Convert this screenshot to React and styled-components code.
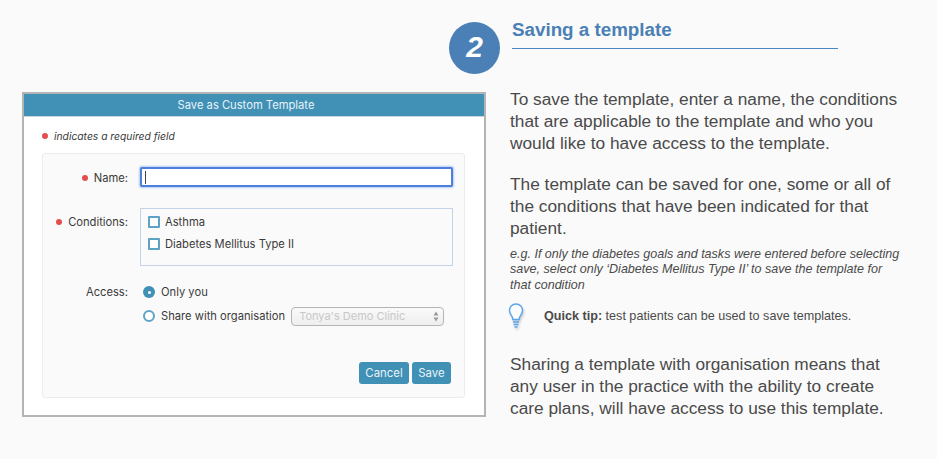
import React from "react";
import styled, { createGlobalStyle } from "styled-components";

const Global = createGlobalStyle`
  html, body {
    margin: 0;
    padding: 0;
    background: #fafafa;
  }
`;

const Page = styled.div`
  display: flex;
  width: 937px;
  height: 459px;
  overflow: hidden;
  background: #fafafa;
  font-family: "Liberation Sans", Arial, sans-serif;
`;

const Left = styled.div`
  width: 449px;
  padding: 92px 0 0 22px;
  box-sizing: border-box;
  flex: none;
`;

const Dialog = styled.div`
  width: 464px;
  height: 325px;
  box-sizing: border-box;
  border: 2px solid #b4b4b4;
  background: #fff;
  font-family: Inter, "Liberation Sans", sans-serif;
  color: #3a3a3a;
`;

const DialogTitle = styled.div`
  height: 23px;
  box-sizing: border-box;
  padding-right: 16px;
  line-height: 22px;
  background: #4190b6;
  border-bottom: 1px solid #c9d6dd;
  color: #e8f3f8;
  font-size: 11.2px;
  text-align: center;
`;

const Required = styled.div`
  display: flex;
  align-items: center;
  gap: 6px;
  height: 36px;
  box-sizing: border-box;
  padding: 1px 0 0 18px;
  font-size: 10.3px;
  font-style: italic;
`;

const Dot = styled.span`
  width: 6px;
  height: 6px;
  border-radius: 50%;
  background: #e34f4f;
  flex: none;
`;

const Panel = styled.div`
  width: 423px;
  height: 245px;
  margin-left: 18px;
  box-sizing: border-box;
  border: 1px solid #ececec;
  border-radius: 3px;
  background: #fafafa;
  padding: 13px 11px 0 0;
  display: flex;
  flex-direction: column;
`;

const Row = styled.div`
  display: flex;
  align-items: ${(p) => (p.$top ? "flex-start" : "center")};
  margin-bottom: ${(p) => p.$gap || 0}px;
`;

const Label = styled.div`
  width: 85px;
  margin-right: 12px;
  display: flex;
  justify-content: flex-end;
  align-items: center;
  gap: 6px;
  font-size: 11.2px;
  flex: none;
  padding-top: ${(p) => p.$pad || 0}px;
`;

const NameInput = styled.div`
  flex: 1;
  height: 20px;
  box-sizing: border-box;
  border: 2px solid #4f7fdc;
  border-radius: 2px;
  background: #fff;
  box-shadow: 0 0 2px 1px #b5cbf2;
  padding: 2px 0 0 3px;
`;

const Caret = styled.div`
  width: 1px;
  height: 13px;
  background: #444;
`;

const Conditions = styled.div`
  flex: 1;
  height: 58px;
  box-sizing: border-box;
  border: 1px solid #c3d3e8;
  padding: 7px 0 0 7px;
  display: flex;
  flex-direction: column;
  gap: 10px;
`;

const Check = styled.label`
  display: flex;
  align-items: center;
  gap: 5px;
  height: 12px;
  font-size: 11.2px;
`;

const Box = styled.span`
  width: 8px;
  height: 8px;
  border: 2px solid #5ea3c6;
  border-radius: 1px;
  background: #fff;
  flex: none;
`;

const Options = styled.div`
  display: flex;
  flex-direction: column;
  gap: 8px;
  padding-left: 3px;
`;

const Radio = styled.label`
  display: flex;
  align-items: center;
  gap: 5px;
  height: 16px;
  font-size: 11.2px;
`;

const RadioMark = styled.span`
  width: ${(p) => (p.$on ? 12 : 8)}px;
  height: ${(p) => (p.$on ? 12 : 8)}px;
  border-radius: 50%;
  flex: none;
  margin-right: 1px;
  background: ${(p) => (p.$on ? "#4190b6" : "#fff")};
  border: ${(p) => (p.$on ? "none" : "2px solid #5ea3c6")};
  display: flex;
  align-items: center;
  justify-content: center;
  &::after {
    content: "";
    display: ${(p) => (p.$on ? "block" : "none")};
    width: 3px;
    height: 3px;
    border-radius: 50%;
    background: #fff;
  }
`;

const SelectBox = styled.div`
  width: 153px;
  height: 19px;
  margin-left: 1px;
  box-sizing: border-box;
  border: 1px solid #b5b5b5;
  border-radius: 4px;
  background: linear-gradient(#fafafa, #eeeeee);
  color: #c8c8c8;
  font-size: 11px;
  padding: 0 4px 0 7px;
  display: flex;
  justify-content: space-between;
  align-items: center;
`;

const Arrows = styled.svg`
  width: 6px;
  height: 11px;
  flex: none;
`;

const Actions = styled.div`
  margin: auto 2px 13px 0;
  display: flex;
  justify-content: flex-end;
  gap: 3px;
`;

const Button = styled.button`
  height: 22px;
  width: ${(p) => p.$w}px;
  padding: 0;
  border: none;
  border-radius: 3px;
  background: #4190b6;
  color: #e8f3f8;
  font-family: inherit;
  font-size: 11.4px;
`;

const Right = styled.div`
  flex: 1;
  padding-top: 22px;
  min-width: 0;
`;

const Header = styled.div`
  display: flex;
  gap: 12px;
  height: 52px;
`;

const Circle = styled.div`
  width: 51px;
  height: 52px;
  box-sizing: border-box;
  padding-bottom: 2px;
  border-radius: 50%;
  background: #4a80b5;
  color: #fff;
  font-size: 30px;
  font-weight: bold;
  font-style: italic;
  display: flex;
  align-items: center;
  justify-content: center;
  flex: none;
`;

const TitleBlock = styled.div`
  width: 326px;
  height: 26px;
  border-bottom: 1px solid #4a86c0;
  box-sizing: content-box;
  font-size: 18.8px;
  font-weight: bold;
  color: #4a80b5;
  line-height: 15px;
`;

const Body = styled.div`
  padding-left: 61px;
  color: #4a4a4a;
`;

const Para = styled.p`
  margin: ${(p) => p.$top}px 0 0;
  font-size: 17.3px;
  line-height: 21.75px;
`;

const Note = styled.p`
  margin: 7px 0 0;
  font-size: 12.55px;
  font-style: italic;
  line-height: 15.5px;
  width: 392px;
`;

const Tip = styled.div`
  display: flex;
  align-items: center;
  margin-top: 9px;
  height: 28px;
  font-size: 12.6px;
`;

const Bulb = styled.svg`
  width: 18px;
  height: 28px;
  margin: 0 19px 0 -3px;
  flex: none;
  filter: drop-shadow(1px 2px 1px rgba(0, 0, 0, 0.18));
`;

export default function App() {
  return (
    <Page>
      <Global />
      <Left>
        <Dialog>
          <DialogTitle>Save as Custom Template</DialogTitle>
          <Required>
            <Dot />
            indicates a required field
          </Required>
          <Panel>
            <Row $gap={21}>
              <Label $pad={2}>
                <Dot />
                Name:
              </Label>
              <NameInput>
                <Caret />
              </NameInput>
            </Row>
            <Row $top $gap={18}>
              <Label $pad={7}>
                <Dot />
                Conditions:
              </Label>
              <Conditions>
                <Check>
                  <Box />
                  Asthma
                </Check>
                <Check>
                  <Box />
                  Diabetes Mellitus Type II
                </Check>
              </Conditions>
            </Row>
            <Row $top>
              <Label $pad={1}>Access:</Label>
              <Options>
                <Radio>
                  <RadioMark $on />
                  Only you
                </Radio>
                <Radio>
                  <RadioMark />
                  Share with organisation
                  <SelectBox>
                    Tonya's Demo Clinic
                    <Arrows viewBox="0 0 6 11">
                      <path d="M3 0.5L5.5 4.5H0.5Z M3 10.5L0.5 6.5H5.5Z" fill="#9a9a9a" />
                    </Arrows>
                  </SelectBox>
                </Radio>
              </Options>
            </Row>
            <Actions>
              <Button $w={50}>Cancel</Button>
              <Button $w={39}>Save</Button>
            </Actions>
          </Panel>
        </Dialog>
      </Left>
      <Right>
        <Header>
          <Circle>2</Circle>
          <TitleBlock>Saving a template</TitleBlock>
        </Header>
        <Body>
          <Para $top={15}>
            To save the template, enter a name, the conditions
            <br />
            that are applicable to the template and who you
            <br />
            would like to have access to the template.
          </Para>
          <Para $top={20}>
            The template can be saved for one, some or all of
            <br />
            the conditions that have been indicated for that
            <br />
            patient.
          </Para>
          <Note>
            e.g. If only the diabetes goals and tasks were entered before selecting
            save, select only ‘Diabetes Mellitus Type II’ to save the template for
            that condition
          </Note>
          <Tip>
            <Bulb viewBox="0 0 18 28">
              <path
                d="M9 2C5 2 2.5 5 2.5 8.5C2.5 11.5 4.5 13 5.5 15.5C5.8 16.3 5.8 17 5.8 17.5H12.2C12.2 17 12.2 16.3 12.5 15.5C13.5 13 15.5 11.5 15.5 8.5C15.5 5 13 2 9 2Z"
                fill="#fdfdfd"
                stroke="#5aa5ee"
                strokeWidth="1.4"
              />
              <path d="M6 20H12M6.5 22.5H11.5M7.5 25H10.5" stroke="#5aa5ee" strokeWidth="1.3" fill="none" />
            </Bulb>
            <span>
              <b>Quick tip:</b> test patients can be used to save templates.
            </span>
          </Tip>
          <Para $top={24}>
            Sharing a template with organisation means that
            <br />
            any user in the practice with the ability to create
            <br />
            care plans, will have access to use this template.
          </Para>
        </Body>
      </Right>
    </Page>
  );
}
